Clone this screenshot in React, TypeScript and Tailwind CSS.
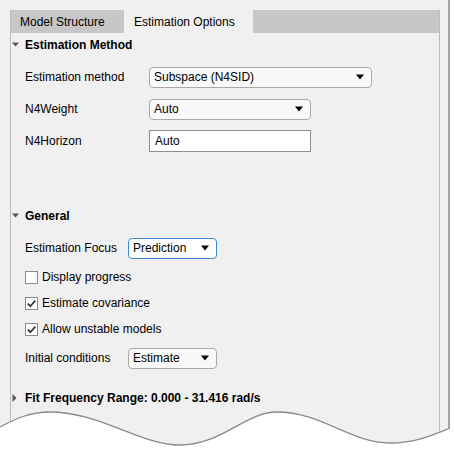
import React from "react";

const font = { fontFamily: '"Liberation Sans", Arial, sans-serif' };

function DownTri({ className = "" }: { className?: string }) {
  return (
    <svg width="8" height="6" viewBox="0 0 8 6" className={className}>
      <path d="M0 0.5 L8 0.5 L4 5.5 Z" fill="#000" />
    </svg>
  );
}

function SectionHeader({ title, open = true }: { title: string; open?: boolean }) {
  return (
    <div className="flex items-center h-[22px] relative font-bold text-[12px] text-black">
      <span className="absolute left-[-13px] top-[8px]">
        {open ? (
          <svg width="7" height="5" viewBox="0 0 7 5">
            <path d="M0 0.5 L7 0.5 L3.5 4.5 Z" fill="#555" />
          </svg>
        ) : (
          <svg width="5" height="8" viewBox="0 0 5 8" className="mt-[-1px]">
            <path d="M0.5 0 L4.5 4 L0.5 8 Z" fill="#555" />
          </svg>
        )}
      </span>
      {title}
    </div>
  );
}

function Dropdown({ value, width, focused = false }: { value: string; width: string; focused?: boolean }) {
  return (
    <div
      className={`${width} h-[21px] rounded-[4px] border flex items-center justify-between pl-[4px] pr-[7px] text-[12px] text-black ${
        focused ? "border-[#3b8ad9] bg-white" : "border-[#a9a9a9] bg-[#f9f9f9]"
      }`}
    >
      <span>{value}</span>
      <DownTri />
    </div>
  );
}

function Checkbox({ label, checked }: { label: string; checked: boolean }) {
  return (
    <div className="h-[26px] flex items-center gap-[4px] text-[12px] text-black">
      <div className="w-[13px] h-[13px] border border-[#8a8a8a] bg-white flex items-center justify-center">
        {checked && (
          <svg width="11" height="11" viewBox="0 0 11 11">
            <path d="M1.8 5.6 L4.3 8.2 L9.3 2.6" fill="none" stroke="#333" strokeWidth="1.7" />
          </svg>
        )}
      </div>
      <span>{label}</span>
    </div>
  );
}

export default function App() {
  return (
    <div className="w-[454px] h-[449px] bg-white relative overflow-hidden" style={font}>
      <div className="w-[450px] h-[449px] bg-[#f0f0f0] border-r-2 border-[#a3a3a3] pt-[10px] pl-[10px] pr-[8px]">
        <div className="h-full border-l border-r border-[#bdbdbd] flex flex-col">
          <div className="h-[23px] bg-[#c7c7c7] flex text-[12px] text-black shrink-0">
            <div className="w-[113px] pl-[9px] flex items-center">Model Structure</div>
            <div className="w-[129px] pl-[10px] flex items-center bg-[#f0f0f0]">Estimation Options</div>
          </div>

          <div className="pl-[14px] pt-[1px] flex flex-col">
            <SectionHeader title="Estimation Method" />
            <div className="mt-[5px] flex flex-col text-[12px] text-black">
              <div className="h-[32px] flex items-center">
                <span className="w-[124px]">Estimation method</span>
                <Dropdown value="Subspace (N4SID)" width="w-[223px]" />
              </div>
              <div className="h-[32px] flex items-center">
                <span className="w-[124px]">N4Weight</span>
                <Dropdown value="Auto" width="w-[162px]" />
              </div>
              <div className="h-[32px] flex items-center">
                <span className="w-[124px]">N4Horizon</span>
                <div className="w-[162px] h-[22px] border border-[#8f8f8f] bg-white flex items-center pl-[5px]">
                  Auto
                </div>
              </div>
            </div>

            <div className="mt-[48px]">
              <SectionHeader title="General" />
            </div>
            <div className="mt-[6px] h-[30px] flex items-center text-[12px] text-black">
              <span className="w-[103px]">Estimation Focus</span>
              <Dropdown value="Prediction" width="w-[89px]" focused />
            </div>
            <div className="mt-[1px] flex flex-col">
              <Checkbox label="Display progress" checked={false} />
              <Checkbox label="Estimate covariance" checked />
              <Checkbox label="Allow unstable models" checked />
            </div>
            <div className="h-[32px] flex items-center text-[12px] text-black">
              <span className="w-[103px]">Initial conditions</span>
              <Dropdown value="Estimate" width="w-[89px]" />
            </div>
            <div className="mt-[13px]">
              <SectionHeader title="Fit Frequency Range: 0.000 - 31.416 rad/s" open={false} />
            </div>
          </div>
        </div>
      </div>

      <svg
        className="absolute left-0 top-[400px]"
        width="454"
        height="49"
        viewBox="0 400 454 49"
      >
        <path
          d="M0 427 C 15 419 30 412 50 412 C 100 412 140 445 180 445 C 222 445 245 412 277 412 C 322 412 350 443 390 443 C 415 443 433 435 450 428 L454 428 L454 449 L0 449 Z"
          fill="#fff"
        />
        <path
          d="M0 427 C 15 419 30 412 50 412 C 100 412 140 445 180 445 C 222 445 245 412 277 412 C 322 412 350 443 390 443 C 415 443 433 435 450 428"
          fill="none"
          stroke="#8a8a8a"
          strokeWidth="1.3"
        />
      </svg>
    </div>
  );
}
